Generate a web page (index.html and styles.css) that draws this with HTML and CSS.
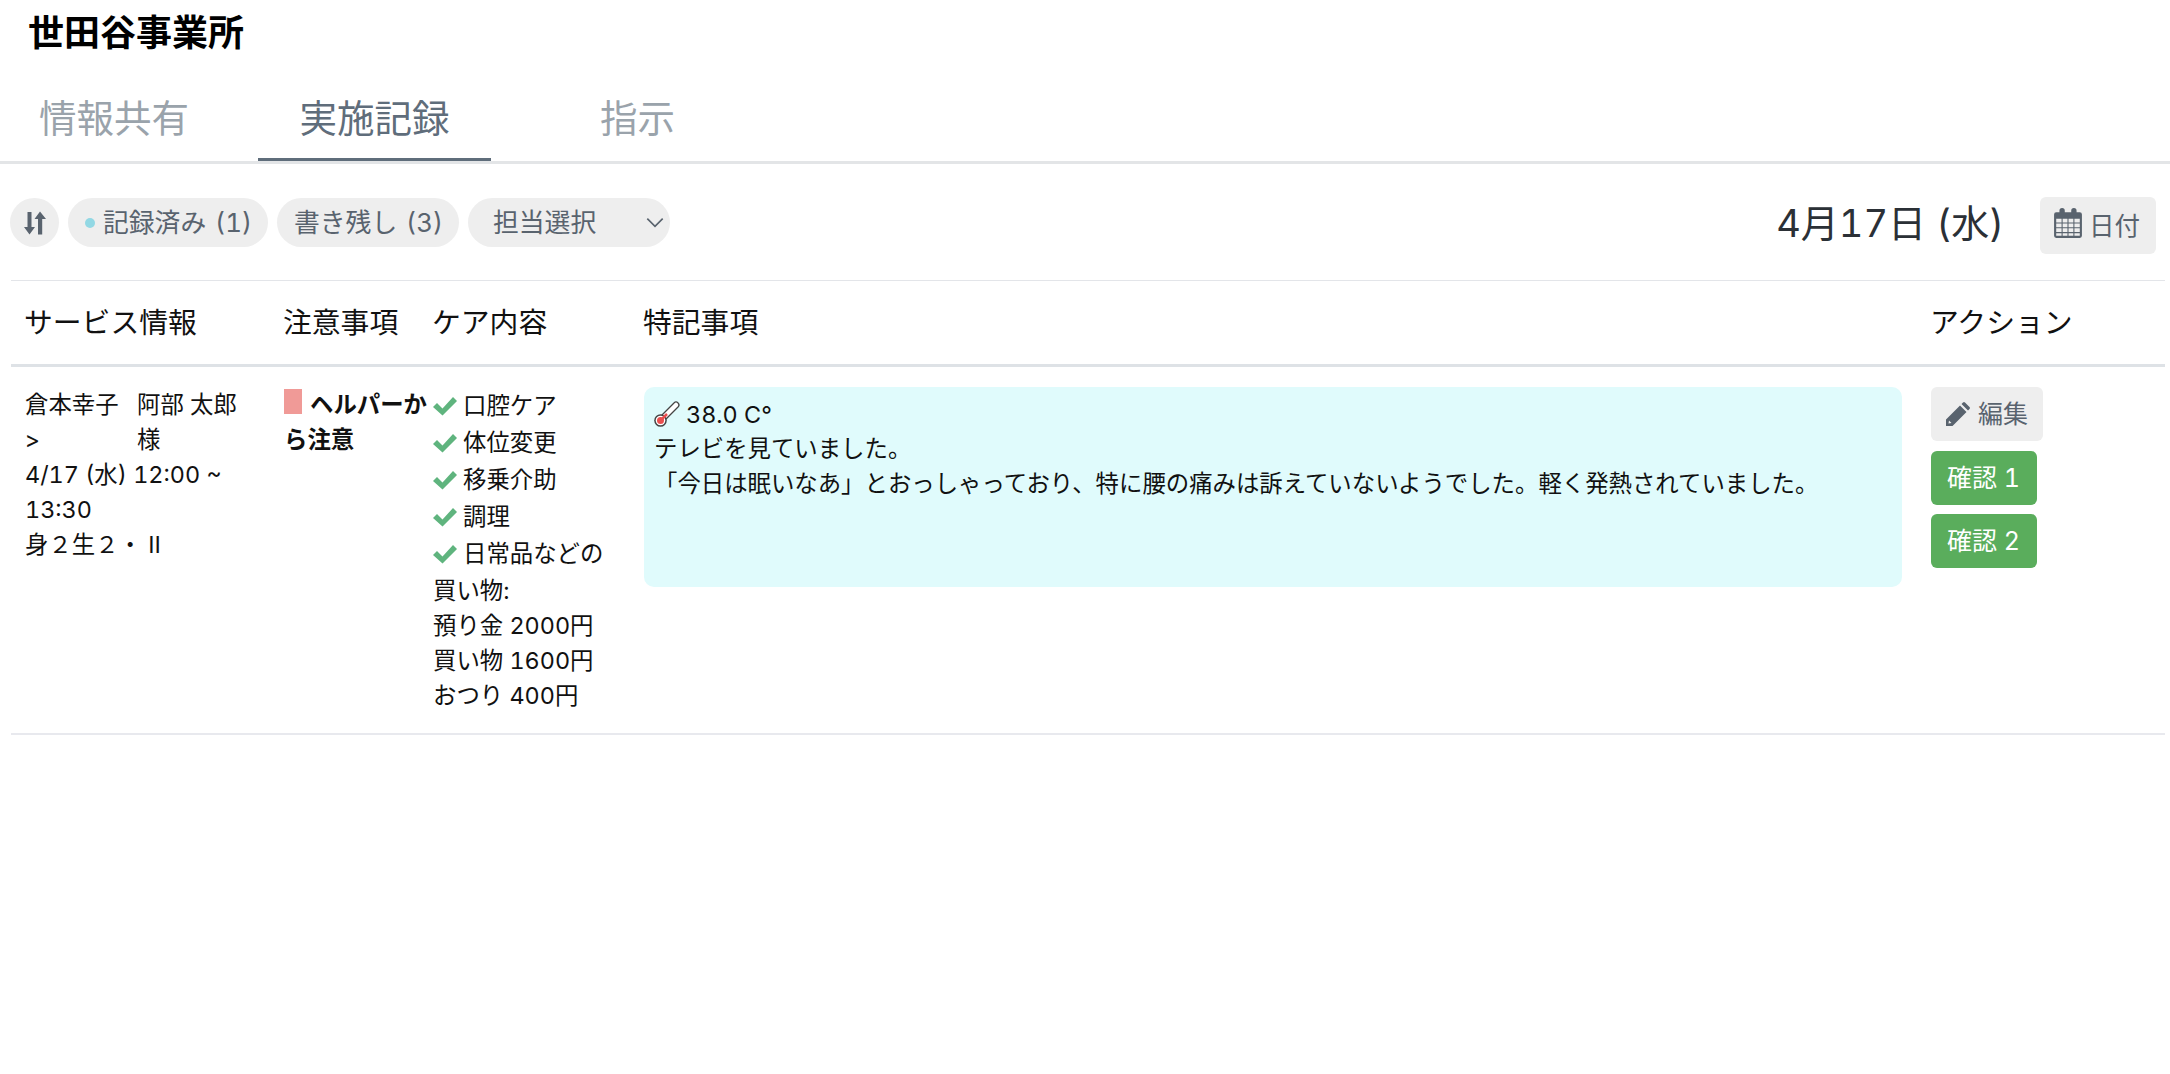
FILE: index.html
```html
<!DOCTYPE html>
<html lang="ja">
<head>
<meta charset="utf-8">
<title>世田谷事業所</title>
<link rel="stylesheet" href="styles.css">
</head>
<body>
<h1 class="office">世田谷事業所</h1>
<nav class="tabs">
  <a class="tab tab-first">情報共有</a>
  <a class="tab tab-active">実施記録</a>
  <a class="tab">指示</a>
</nav>
<div class="toolbar">
  <button class="pill pill-sort" aria-label="並び替え">
    <svg class="sort-icon" viewBox="0 0 22 24"><path d="M3.500 1h4v15H11l-5.500 7.500L0 16h3.500z"/><path d="M14 23.500V8h-3.500L16 .5 22 8h-3.800v15.500z"/></svg>
  </button>
  <button class="pill pill-done"><span class="dot"></span>記録済み (1)</button>
  <button class="pill pill-draft">書き残し (3)</button>
  <button class="pill pill-select">担当選択
    <svg class="chevron" viewBox="0 0 16 10"><path d="M1 1.500l7 7 7-7" fill="none" stroke="currentColor" stroke-width="1.500"/></svg>
  </button>
  <div class="date">4月17日 (水)</div>
  <button class="btn-date">
    <svg class="cal-icon" viewBox="0 0 26 28"><path d="M2 4h3V2.500a2.500 2.500 0 0 1 5 0V4h6V2.500a2.500 2.500 0 0 1 5 0V4h3a2 2 0 0 1 2 2v20a2 2 0 0 1-2 2H2a2 2 0 0 1-2-2V6a2 2 0 0 1 2-2z"/><path fill="#eeeeee" d="M2 10h5v3.500H2zM8 10h4.500v3.500H8zM13.500 10H18v3.500h-4.500zM19 10h5v3.500h-5zM2 14.500h5V18H2zM8 14.500h4.500V18H8zM13.500 14.500H18V18h-4.500zM19 14.500h5V18h-5zM2 19h5v3.500H2zM8 19h4.500v3.500H8zM13.500 19H18v3.500h-4.500zM19 19h5v3.500h-5zM2 23.500h5V26H2zM8 23.500h4.500V26H8zM13.500 23.500H18V26h-4.500zM19 23.500h5V26h-5z"/></svg>
    日付
  </button>
</div>
<table class="records">
  <colgroup>
    <col class="col-service"><col class="col-caution"><col class="col-care"><col class="col-note"><col>
  </colgroup>
  <thead>
    <tr><th class="first">サービス情報</th><th>注意事項</th><th>ケア内容</th><th>特記事項</th><th class="last">アクション</th></tr>
  </thead>
  <tbody>
    <tr>
      <td class="first">
        <div class="names"><span class="staff">倉本幸子 &gt;</span><span class="client">阿部 太郎 様</span></div>
        <div>4/17 (水) 12:00 ~ 13:30</div>
        <div>身２生２・ Ⅱ</div>
      </td>
      <td class="caution"><span class="flag"></span>ヘルパーから注意</td>
      <td>
        <ul class="care">
          <li><svg class="check" viewBox="0 0 24 20"><path d="M0 11l4-4 5.500 5.500L20 1l4 4L9.500 19.500z"/></svg>口腔ケア</li>
          <li><svg class="check" viewBox="0 0 24 20"><path d="M0 11l4-4 5.500 5.500L20 1l4 4L9.500 19.500z"/></svg>体位変更</li>
          <li><svg class="check" viewBox="0 0 24 20"><path d="M0 11l4-4 5.500 5.500L20 1l4 4L9.500 19.500z"/></svg>移乗介助</li>
          <li><svg class="check" viewBox="0 0 24 20"><path d="M0 11l4-4 5.500 5.500L20 1l4 4L9.500 19.500z"/></svg>調理</li>
          <li><svg class="check" viewBox="0 0 24 20"><path d="M0 11l4-4 5.500 5.500L20 1l4 4L9.500 19.500z"/></svg>日常品などの</li>
        </ul>
        <div>買い物:</div>
        <div>預り金 2000円</div>
        <div>買い物 1600円</div>
        <div>おつり 400円</div>
      </td>
      <td class="note-cell">
        <div class="note">
          <div class="temp"><svg class="thermo" viewBox="0 0 26 26"><path d="M7 19L22 4" stroke="#444" stroke-width="7" stroke-linecap="round"/><path d="M7 19L22 4" stroke="#fff" stroke-width="4.500" stroke-linecap="round"/><circle cx="6.500" cy="19.500" r="6.300" fill="#444"/><circle cx="6.500" cy="19.500" r="4.800" fill="#fff"/><circle cx="6.500" cy="19.500" r="3.500" fill="#e94f4f"/><path d="M7 19l6-6" stroke="#e94f4f" stroke-width="2.500"/></svg>38.0 C°</div>
          <div>テレビを見ていました。</div>
          <div>「今日は眠いなあ」とおっしゃっており、特に腰の痛みは訴えていないようでした。軽く発熱されていました。</div>
        </div>
      </td>
      <td class="actions">
        <button class="btn btn-edit"><svg class="pencil" viewBox="0 0 24 24"><path d="M0 24v-6.500L14 3.500l6.500 6.500L6.500 24zM3 18.500L2.500 21.500 5.500 21zM15.500 2l1.500-1.500a1.500 1.500 0 0 1 2 0l4.500 4.500a1.500 1.500 0 0 1 0 2L22 8.500z"/></svg>編集</button>
        <button class="btn btn-ok">確認 1</button>
        <button class="btn btn-ok">確認 2</button>
      </td>
    </tr>
  </tbody>
</table>
</body>
</html>
```
FILE: styles.css
```css
* { box-sizing: border-box; }
html, body { margin: 0; padding: 0; background: #fff; }
body {
  font-family: Inter, "Noto Sans CJK JP", "Noto Sans", sans-serif;
  font-variant-numeric: tabular-nums;
  color: #111;
  font-size: 23.4px;
  line-height: 35px;
}
button { font-family: inherit; font-variant-numeric: inherit; border: 0; margin: 0; }

.office {
  margin: 0;
  padding: 8px 28px 0;
  height: 71px;
  font-size: 36px;
  line-height: 50px;
  font-weight: 700;
  color: #000;
}

.tabs {
  display: flex;
  gap: 30px;
  height: 93px;
  border-bottom: 3px solid #e3e5e7;
}
.tab {
  width: 233px;
  height: 90px;
  font-size: 37.5px;
  line-height: 50px;
  padding-top: 23px;
  text-align: center;
  color: #9aa3ab;
}
.tab-first { width: 228px; }
.tab-active {
  color: #5f6d7b;
  border-bottom: 3px solid #5f6d7b;
}

.toolbar {
  display: flex;
  align-items: center;
  gap: 9px;
  padding: 34px 14px 33px 10px;
  height: 116px;
}
.pill {
  display: flex;
  align-items: center;
  height: 49px;
  border-radius: 25px;
  background: #eeeeee;
  color: #59636e;
  font-size: 25.8px;
  line-height: 35px;
  word-spacing: 2px;
  padding: 0;
  white-space: nowrap;
}
.pill-sort { width: 49px; justify-content: center; }
.sort-icon { width: 22px; height: 24px; fill: #59636e; }
.pill-done { width: 200px; padding-left: 17px; }
.dot {
  width: 10px;
  height: 10px;
  margin-right: 8px;
  border-radius: 50%;
  background: #92d8e4;
}
.pill-draft { width: 182px; padding-left: 17px; }
.pill-select { width: 202px; padding-left: 25px; justify-content: space-between; padding-right: 6px; }
.chevron { width: 18px; height: 11px; margin-right: 0; color: #59636e; }

.date {
  margin-left: auto;
  font-size: 38px;
  line-height: 50px;
  color: #2b3036;
  margin-right: 27px;
}
.btn-date {
  display: flex;
  align-items: center;
  align-self: flex-start;
  gap: 7px;
  width: 116px;
  height: 57px;
  margin-top: -1px;
  padding: 0 0 5px 14px;
  border-radius: 6px;
  background: #eeeeee;
  color: #59636e;
  font-size: 25.5px;
}
.cal-icon { width: 28px; height: 30px; fill: #59636e; flex: none; }

.records {
  width: 2154px;
  margin-left: 11px;
  border-collapse: collapse;
  table-layout: fixed;
}
.col-service { width: 273px; }
.col-caution { width: 149px; }
.col-care { width: 211px; }
.col-note { width: 1287px; }
th {
  height: 85px;
  padding: 0;
  text-align: left;
  text-indent: -1px;
  font-size: 28.8px;
  font-weight: 400;
  color: #111;
  border-top: 1px solid #e3e5e9;
  border-bottom: 3px solid #dee2e6;
}
td {
  vertical-align: top;
  padding: 20px 0 20px;
  border-bottom: 2px solid #e8e9ee;
}
.first { padding-left: 14px; padding-right: 14px; }

.names { display: flex; }
.staff { width: 112px; flex: none; padding-right: 12px; }
.client { width: 112px; flex: none; }

.caution { font-weight: 700; padding-right: 4px; }
.flag {
  display: inline-block;
  width: 18px;
  height: 25px;
  margin-right: 8px;
  background: #f09a97;
  vertical-align: top;
  margin-top: 2px;
}

.care { list-style: none; margin: 0 0 1px; padding: 0; }
.care li { display: flex; align-items: center; height: 37px; white-space: nowrap; }
.check { width: 24px; height: 20px; margin-right: 6px; fill: #5fb47e; flex: none; }

.note-cell { padding-right: 29px; }
.note {
  height: 200px;
  margin: 0;
  padding: 10px 10px;
  border-radius: 10px;
  background: #e0fbfc;
}
.temp { display: flex; align-items: center; height: 34px; }
.thermo { width: 26px; height: 26px; margin-right: 6px; flex: none; }

.actions { padding-top: 20px; }
.btn {
  display: block;
  height: 54px;
  padding: 0 16px;
  margin-bottom: 9.5px;
  border-radius: 6px;
  font-size: 25px;
  line-height: 54px;
  white-space: nowrap;
}
.btn-edit { display: flex; align-items: center; background: #eeeeee; color: #59636e; width: 112px; padding-left: 15px; }
.btn-ok { background: #5aad5c; color: #fff; width: 106px; text-align: left; }
.pencil { width: 24px; height: 24px; margin-right: 8px; fill: #59636e; flex: none; }
```
